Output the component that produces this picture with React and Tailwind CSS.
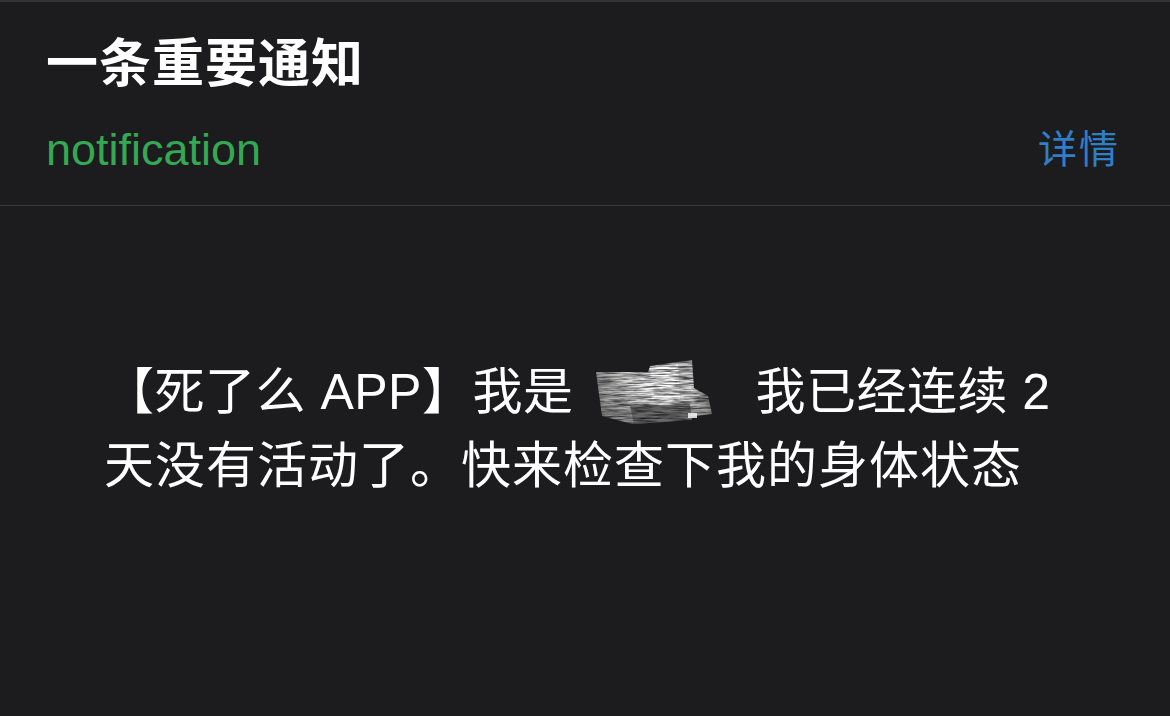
import React from 'react';

const font = 'font-["Liberation_Sans","Noto_Sans_CJK_SC",sans-serif]';

/**
 * Redacted - the scribbled-out name in the message body, drawn as a noisy smear.
 */
const Redacted = () => (
  <svg width="125" height="68" viewBox="0 0 125 68" className="inline-block align-middle ml-[21px] mr-[36px] -mt-[8px]">
    <defs>
      <filter id="scribble" x="0" y="0" width="100%" height="100%">
        <feTurbulence type="fractalNoise" baseFrequency="0.05 0.6" numOctaves="3" seed="7" />
        <feColorMatrix type="matrix" values="0 0 0 0 1  0 0 0 0 1  0 0 0 0 1  0 0 0 1.8 -0.2" result="noise" />
        <feComposite in="SourceGraphic" in2="noise" operator="in" />
        <feGaussianBlur stdDeviation="0.7" />
      </filter>
      <radialGradient id="glow" cx="0.55" cy="0.4" r="0.6">
        <stop offset="0" stopColor="#ffffff" />
        <stop offset="0.5" stopColor="#d8d8d8" />
        <stop offset="1" stopColor="#8a8a8a" />
      </radialGradient>
    </defs>
    <g filter="url(#scribble)">
      <polygon points="2,14 54,14 56,8 98,2 100,30 114,38 118,56 38,66 8,58" fill="url(#glow)" />
      <polygon points="56,10 84,6 86,42 58,44" fill="#ffffff" />
      <polygon points="36,48 96,46 98,62 40,66" fill="#6a6a6a" />
    </g>
    <rect x="94" y="55" width="9" height="5" fill="#f5f5f5" opacity="0.85" />
  </svg>
);

const App = () => {
  return (
    <div className={`w-[1170px] h-[716px] bg-[#1c1c1e] border-t-2 border-[#333335] overflow-hidden ${font}`}>
      {/* Header */}
      <div className="pl-[46px] pr-[50px] pt-[30px] pb-[30px] border-b border-[#38383a]">
        <h1 className="text-[52px] leading-[64px] font-bold text-white tracking-[1px]">一条重要通知</h1>
        <div className="flex items-end justify-between mt-[29px]">
          <span className="text-[45px] leading-[50px] text-[#34a853]">notification</span>
          <span className="text-[39px] leading-[50px] text-[#2f7fc8] tracking-[2px]">详情</span>
        </div>
      </div>

      {/* Message body */}
      <div className="px-[104px] pt-[149px] text-[50px] leading-[74px] text-white">
        <div className="whitespace-nowrap tracking-[0.5px]">
          【死了么 APP】我是<Redacted />我已经连续 2
        </div>
        <div className="whitespace-nowrap tracking-[1px]">天没有活动了。快来检查下我的身体状态</div>
      </div>
    </div>
  );
};

export default App;
